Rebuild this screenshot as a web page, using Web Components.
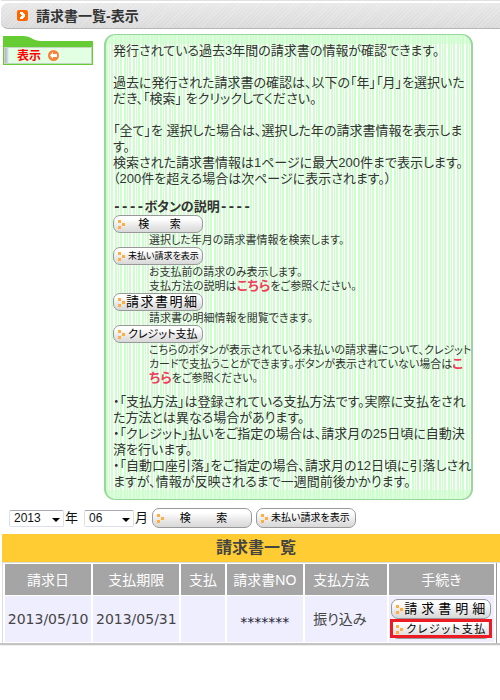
<!DOCTYPE html>
<html lang="ja">
<head>
<meta charset="utf-8">
<meta name="viewport" content="width=device-width, initial-scale=1">
<title>請求書一覧-表示</title>
<style>
  body {
    margin: 0;
    background: #fff;
    color: #333;
    font: 13px/16px "Liberation Sans", "Noto Sans CJK JP", sans-serif;
    font-feature-settings: "palt";
  }
</style>
</head>
<body>
<invoice-page></invoice-page>

<script>
class PageTitle extends HTMLElement {
  connectedCallback() {
    this.attachShadow({ mode: 'open' });
    this.shadowRoot.innerHTML = `
      <style>
        :host { display: block; padding-top: 2px; border-top: 1px solid #e0e0e0; margin-left: 1px; }
        header {
          display: flex;
          align-items: center;
          gap: 8px;
          height: 25px;
          padding-left: 16px;
          border-bottom: 1px solid #b5b5b5;
          border-radius: 7px 0 0 7px;
          background:
            repeating-linear-gradient(135deg, rgba(255,255,255,.2) 0 1px, transparent 1px 3px),
            linear-gradient(#e8e8e8, #dadada);
        }
        h1 { margin: 0; font-size: 14px; line-height: 20px; }
        svg { display: block; }
      </style>
      <header>
        <svg width="11" height="11" viewBox="0 0 11 11" aria-hidden="true">
          <rect width="11" height="11" rx="2" fill="#f60"/>
          <path d="M3 2h3v1h1v1h1v3H7v1H6v1H3V7h1V6h1V5H4V4H3z" fill="#fff"/>
        </svg>
        <h1><slot></slot></h1>
      </header>
    `;
  }
}

class SideTab extends HTMLElement {
  connectedCallback() {
    this.attachShadow({ mode: 'open' });
    this.shadowRoot.innerHTML = `
      <style>
        :host { display: block; }
        svg { display: block; }
        a {
          display: flex;
          align-items: center;
          gap: 7px;
          height: 17px;
          padding-left: 13px;
          border: 1px solid #6c3;
          border-top-width: 6px;
          background: linear-gradient(90deg, #b9bccb 0 2px, #dde 4px, #e3ffe3 5px);
          box-shadow: inset 0 0 0 1px #c2d6c2;
          color: #f00;
          font-size: 12px;
          font-weight: bold;
          line-height: 16px;
          text-decoration: none;
        }
      </style>
      <svg width="40" height="5" viewBox="0 0 40 5" aria-hidden="true">
        <path d="M0 0h20c8 0 10 5 18 5H0z" fill="#6c3"/>
      </svg>
      <a href="#">
        <span><slot></slot></span>
        <svg width="11" height="11" viewBox="0 0 11 11" aria-hidden="true">
          <circle cx="5.500" cy="5.500" r="5.500" fill="#f7823a"/>
          <path d="M5 2L2 5.500 5 9V7h4V4H5z" fill="#fff"/>
        </svg>
      </a>
    `;
  }
}

class PillButton extends HTMLElement {
  connectedCallback() {
    this.attachShadow({ mode: 'open' });
    this.shadowRoot.innerHTML = `
      <style>
        :host { display: block; width: 90px; height: 18px; --label-size: 9px; }
        :host([large]) { width: 100px; height: 20px; --label-size: 10px; }
        :host([medium-text]) { --label-size: 11px; }
        :host([wide-text]) { --label-size: 13px; }
        button {
          display: flex;
          align-items: center;
          gap: 3px;
          box-sizing: border-box;
          width: 100%;
          height: 100%;
          padding: 0 5px 0 4px;
          border: 1px solid #999;
          border-radius: 7px;
          background: linear-gradient(#fff 20%, #e9e9e9 60%, #d8d8d8);
          color: #000;
          font: inherit;
          font-size: var(--label-size);
          line-height: 14px;
          font-feature-settings: inherit;
          white-space: nowrap;
        }
        :host([wide-text]) button { gap: 1px; }
        svg { flex: none; }
        .label { display: flex; flex: 1; justify-content: space-between; }
        :host([spread]) .label { padding-right: 6px; justify-content: space-around; }
      </style>
      <button type="button">
        <svg width="7" height="9" viewBox="0 0 7 9" aria-hidden="true">
          <path d="M0 0h3v3H0zM4 3h3v3H4zM0 6h3v3H0z" fill="#ffae42"/>
        </svg>
        <span class="label"></span>
      </button>
    `;
    const label = this.shadowRoot.querySelector('.label');
    this.getAttribute('label').split(' ').forEach((part) => {
      const span = document.createElement('span');
      span.textContent = part;
      label.append(span);
    });
  }
}

class InfoPanel extends HTMLElement {
  connectedCallback() {
    this.attachShadow({ mode: 'open' });
    this.shadowRoot.innerHTML = `
      <style>
        :host {
          display: block;
          box-sizing: border-box;
          padding: 8px 0 9px 7px;
          border: 2px solid #99d699;
          border-width: 1px 2px;
          border-radius: 11px;
          background:
            linear-gradient(rgba(204,255,204,.6) 0 9px, transparent 9px calc(100% - 9px), rgba(204,255,204,.6) calc(100% - 9px)),
            repeating-linear-gradient(90deg, #cfc 0 2px, #fff 2px 3px, #cfc 3px 4px, #fff 4px 5px, #cfc 5px 7px, #fff 7px 9px);
          white-space: nowrap;
        }
      </style>
      <slot></slot>
    `;
  }
}

class ButtonGuide extends HTMLElement {
  connectedCallback() {
    this.attachShadow({ mode: 'open' });
    this.shadowRoot.innerHTML = `
      <style>
        :host { display: block; }
        div { padding-left: 36px; font-size: 11px; line-height: 14px; }
      </style>
      <slot name="button"></slot>
      <div><slot></slot></div>
    `;
  }
}

class SearchBar extends HTMLElement {
  connectedCallback() {
    this.attachShadow({ mode: 'open' });
    this.shadowRoot.innerHTML = `
      <style>
        :host { display: flex; align-items: center; gap: 4px; padding: 8px 0 6px 9px; color: #111; }
        label { display: flex; align-items: center; gap: 1px; }
        label + label { margin-left: 2px; }
        .box { display: grid; align-items: center; }
        select, .box svg { grid-area: 1 / 1; }
        .box svg { justify-self: end; margin: 4px 4px 0 0; pointer-events: none; }
        select {
          appearance: none;
          width: 55px;
          height: 17px;
          padding: 0 4px;
          border: 1px solid #dde0e8;
          border-top-color: #a8abb3;
          border-radius: 2px;
          background: #fff;
          color: #111;
          font: 12px/14px "Liberation Sans", sans-serif;
        }
        .month select { width: 50px; }
      </style>
      <label>
        <span class="box">
          <select><option>2013</option></select>
          <svg width="8" height="4" viewBox="0 0 8 4"><path d="M0 0h8L4 4z"/></svg>
        </span>
        年
      </label>
      <label class="month">
        <span class="box">
          <select><option>06</option></select>
          <svg width="8" height="4" viewBox="0 0 8 4"><path d="M0 0h8L4 4z"/></svg>
        </span>
        月
      </label>
      <pill-button large spread medium-text label="検 索"></pill-button>
      <pill-button large label="未払い請求を表示"></pill-button>
    `;
  }
}

class InvoiceTable extends HTMLElement {
  connectedCallback() {
    this.attachShadow({ mode: 'open' });
    this.shadowRoot.innerHTML = `
      <style>
        :host { display: block; padding-left: 2px; }
        h2 {
          margin: 0;
          padding-left: 10px;
          background: #fc3;
          color: #444;
          font-size: 16px;
          line-height: 28px;
          text-align: center;
          border-bottom: 1px solid #ddd;
        }
        .frame { margin-right: 3px; border: 1px solid #ddd; border-width: 0 1px; border-right-color: #999; }
        .rule { height: 2px; margin-left: -2px; background: #c4c4c4; border-bottom: 1px solid #eee; }
        table {
          width: 100%;
          border-collapse: separate;
          border-spacing: 2px 1px;
          table-layout: fixed;
          color: #444;
          font-size: 14px;
          line-height: 18px;
          white-space: nowrap;
        }
        th, td { box-sizing: border-box; padding: 0; }
        th { height: 31px; background: #a5a5a5; color: #fff; font-weight: normal; }
        td { height: 46px; background: #efeeff; text-align: center; }
        .left { text-align: left; padding-left: 8px; }
        .date, .number { font-family: "DejaVu Sans", sans-serif; }
        .number { padding-top: 6px; color: #223; }
        .actions { display: flex; flex-direction: column; align-items: center; }
        .marked { position: relative; }
        .marked::after {
          content: "";
          position: absolute;
          inset: 0 -1px 1px;
          border: 3px solid #ed1c24;
          pointer-events: none;
        }
      </style>
      <h2>請求書一覧</h2>
      <div class="frame">
        <table>
          <colgroup>
            <col style="width:18%"><col style="width:18%"><col style="width:9%">
            <col style="width:16%"><col style="width:17%"><col style="width:22%">
          </colgroup>
          <thead>
            <tr>
              <th>請求日</th><th>支払期限</th><th>支払</th>
              <th>請求書NO</th><th class="left">支払方法</th><th>手続き</th>
            </tr>
          </thead>
          <tbody>
            <tr>
              <td class="date">2013/05/10</td><td class="date">2013/05/31</td><td></td>
              <td class="number">*******</td><td class="left">振り込み</td>
              <td>
                <div class="actions">
                  <pill-button large wide-text label="請 求 書 明 細"></pill-button>
                  <div class="marked"><pill-button large medium-text label="ク レ ジ ッ ト 支 払"></pill-button></div>
                </div>
              </td>
            </tr>
          </tbody>
        </table>
      </div>
      <div class="rule"></div>
    `;
  }
}

class InvoicePage extends HTMLElement {
  connectedCallback() {
    this.attachShadow({ mode: 'open' });
    this.shadowRoot.innerHTML = `
      <style>
        :host { display: block; }
        main { display: flex; align-items: flex-start; gap: 11px; padding: 5px 27px 0 3px; }
        side-tab { flex: none; width: 90px; margin-top: 2px; }
        info-panel { flex: 1; min-width: 0; }
        p { margin: 0 0 16px; }
        h2 { margin: -4px 0 0; font-size: 13px; line-height: 16px; }
        h2 span { font-family: "DejaVu Sans Mono", monospace; }
        button-guide:last-of-type { margin-bottom: 9px; }
        .last { margin-bottom: 0; }
        button-guide a { color: #f0405c; font-size: 13px; font-weight: bold; text-decoration: none; }
      </style>
      <page-title>請求書一覧-表示</page-title>
      <main>
        <side-tab>表示</side-tab>
        <info-panel>
          <p>発行されている過去3年間の請求書の情報が確認できます。</p>
          <p>過去に発行された請求書の確認は、以下の「年」「月」を選択いた<br>だき、「検索」 をクリックしてください。</p>
          <p>「全て」を 選択した場合は、選択した年の請求書情報を表示しま<br>す。<br>検索された請求書情報は1ページに最大200件まで表示します。<br>（200件を超える場合は次ページに表示されます。）</p>
          <h2><span>----</span>ボタンの説明<span>----</span></h2>
          <button-guide>
            <pill-button slot="button" spread medium-text label="検 索"></pill-button>
            選択した年月の請求書情報を検索します。
          </button-guide>
          <button-guide>
            <pill-button slot="button" label="未払い請求を表示"></pill-button>
            お支払前の請求のみ表示します。<br>支払方法の説明は<a href="#">こちら</a>をご参照ください。
          </button-guide>
          <button-guide>
            <pill-button slot="button" wide-text label="請 求 書 明 細"></pill-button>
            請求書の明細情報を閲覧できます。
          </button-guide>
          <button-guide>
            <pill-button slot="button" medium-text label="ク レ ジ ッ ト 支 払"></pill-button>
            こちらのボタンが表示されている未払いの請求書について、クレジット<br>カードで支払うことができます。ボタンが表示されていない場合は<a href="#">こ<br>ちら</a>をご参照ください。
          </button-guide>
          <p class="last">・「支払方法」は登録されている支払方法です。実際に支払をされ<br>た方法とは異なる場合があります。<br>・「クレジット」払いをご指定の場合は、請求月の25日頃に自動決<br>済を行います。<br>・「自動口座引落」をご指定の場合、請求月の12日頃に引落しされ<br>ますが、情報が反映されるまで一週間前後かかります。</p>
        </info-panel>
      </main>
      <search-bar></search-bar>
      <invoice-table></invoice-table>
    `;
  }
}

customElements.define('page-title', PageTitle);
customElements.define('side-tab', SideTab);
customElements.define('pill-button', PillButton);
customElements.define('info-panel', InfoPanel);
customElements.define('button-guide', ButtonGuide);
customElements.define('search-bar', SearchBar);
customElements.define('invoice-table', InvoiceTable);
customElements.define('invoice-page', InvoicePage);
</script>
</body>
</html>
